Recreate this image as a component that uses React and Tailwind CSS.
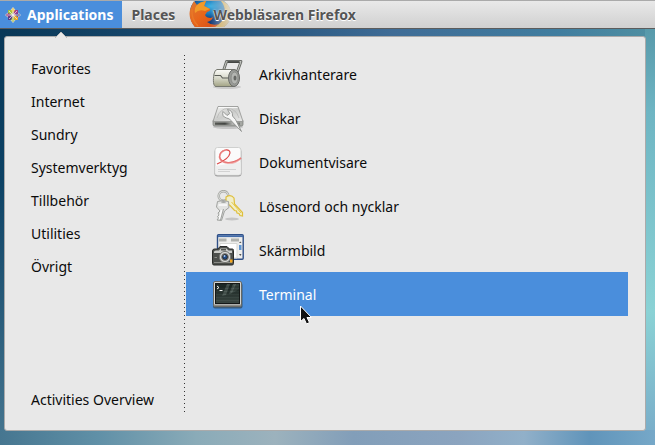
const categories = ['Favorites', 'Internet', 'Sundry', 'Systemverktyg', 'Tillbehör', 'Utilities', 'Övrigt'];

function ArchiveIcon() {
  return (
    <svg className="size-8" viewBox="0 0 32 32" aria-hidden="true">
      <defs>
        <linearGradient id="roll" x1="0" y1="0" x2="0" y2="1">
          <stop offset="0" stopColor="#fbfbf8" /><stop offset=".45" stopColor="#dcddd0" /><stop offset="1" stopColor="#a3a485" />
        </linearGradient>
      </defs>
      <ellipse cx="15" cy="29" rx="14" ry="2" fill="#000" opacity=".12" />
      <path d="M11 14 14.500 3.500H29L24.500 16" fill="none" stroke="#6a6c68" strokeWidth="2.800" strokeLinejoin="round" />
      <path d="M11 14 14.500 3.500H29L24.500 16" fill="none" stroke="#c4c6c1" strokeWidth="1" strokeLinejoin="round" />
      <rect x="15.500" y="2" width="12" height="3" rx="1.500" fill="#444643" />
      <path d="M16 2.800H27" stroke="#858785" strokeWidth=".8" />
      <path d="M5 11.500H21C28 11.500 28 28 21 28.500H4C1 28.500 1 22 2 16Q3 11.500 5 11.500Z" fill="url(#roll)" stroke="#777970" />
      <path d="M2.500 17.500H8.500L10.500 20H17" fill="none" stroke="#5b5d57" strokeWidth="1.200" />
      <ellipse cx="22" cy="20" rx="5.500" ry="8.500" fill="#9a9c98" stroke="#696b68" />
      <ellipse cx="22.500" cy="20" rx="3.500" ry="6" fill="#b3b5b1" stroke="#898b87" />
      <ellipse cx="23" cy="20" rx="1.500" ry="2.500" fill="#666864" />
    </svg>
  );
}

function DisksIcon() {
  return (
    <svg className="size-8" viewBox="0 0 32 32" aria-hidden="true">
      <defs>
        <linearGradient id="disk" x1="0" y1="0" x2="1" y2="1">
          <stop offset="0" stopColor="#f8f8f7" /><stop offset=".5" stopColor="#cbccca" /><stop offset="1" stopColor="#e9e9e8" />
        </linearGradient>
        <linearGradient id="slot" x1="0" y1="0" x2="1" y2="0">
          <stop offset="0" stopColor="#555753" /><stop offset=".4" stopColor="#444643" /><stop offset=".7" stopColor="#b4b5b3" /><stop offset="1" stopColor="#777975" />
        </linearGradient>
      </defs>
      <ellipse cx="16" cy="25" rx="15" ry="2" fill="#000" opacity=".15" />
      <path d="M1 18.500H31V22.500Q31 24 29.500 24H2.500Q1 24 1 22.500Z" fill="#a6a8a4" stroke="#777975" strokeWidth=".7" />
      <path d="M6 4.500H26L31 19.500H1Z" fill="url(#disk)" stroke="#90928f" strokeWidth=".8" />
      <path d="M6.500 5.500H25.500" stroke="#fff" strokeWidth=".8" />
      <path d="M3 20.500H28V22.800H3Z" fill="url(#slot)" />
      <path d="M5 16Q8 6.500 16 6.500T27 16" fill="none" stroke="#b7b8b6" strokeWidth=".8" />
      <path d="M11 9.500Q9.500 14.500 14.500 16L17.500 17 29.500 29.500 23.500 17.500 20.500 14Q21 8.500 15.500 7.500L17.800 11.500 15 13.500Z" fill="#f6f6f5" stroke="#8f918e" strokeWidth=".9" />
    </svg>
  );
}

function DocumentIcon() {
  return (
    <svg className="size-8" viewBox="0 0 32 32" aria-hidden="true">
      <rect x="2.500" y="3" width="27" height="27.500" rx="3" fill="#777" opacity=".65" />
      <rect x="3" y="1.500" width="26" height="27.500" rx="2.500" fill="#fbfbfb" stroke="#cfd0cf" />
      <path d="M3.500 20 28.500 16V28.500H3.500Z" fill="#efefef" />
      <path d="M5 18Q17 13 18 7Q18 3.500 13.500 4Q7.500 5.500 7.500 11Q9 17 17 16.500Q24 16 29 12" fill="none" stroke="#dc4747" strokeWidth="1.200" />
      <path d="M13.500 4Q8 5.500 7.500 11Q9 17 17 17Q24 17 29 12" fill="none" stroke="#ee8c8a" strokeWidth="1.800" opacity=".7" />
      <path d="M6 23.500H24M6 25.500H18" stroke="#d2d2d2" />
    </svg>
  );
}

function KeysIcon() {
  return (
    <svg className="size-8" viewBox="0 0 32 32" aria-hidden="true">
      <ellipse cx="20" cy="29" rx="7" ry="1.500" fill="#000" opacity=".15" />
      <circle cx="11.500" cy="6" r="4.800" fill="none" stroke="#a2a49f" strokeWidth="2.500" />
      <circle cx="11.500" cy="6" r="4.800" fill="none" stroke="#d9dad8" strokeWidth="1.100" />
      <path d="M14 7Q19 4 22 8L22.500 14 30.500 22.500 30.500 26 28 25.500 27 23.500 25 23 24.500 21 22.500 20.500 18 15.500 14 13Z" fill="#f1eec9" stroke="#dfbf3c" strokeWidth="1.200" />
      <path d="M19.500 12 29 23" stroke="#e7cb4b" strokeWidth="1" />
      <path d="M5.500 11.500Q11 9.500 16.500 11.500L17 17.500 12.500 21 9.500 30.500 5 30 6.500 28 5.500 26.500 7 25 6 23 8 21 4.500 17Z" fill="#e2e3e1" stroke="#a0a29f" />
      <path d="M6.500 15H15M9.500 20 7.500 29" stroke="#fcfcfc" strokeWidth="1.500" />
      <path d="M11.500 19 8.500 30" stroke="#8f918e" strokeWidth=".8" />
      <ellipse cx="11.500" cy="12" rx="2.500" ry="1" fill="#a7a9a6" />
    </svg>
  );
}

function ScreenshotIcon() {
  return (
    <svg className="size-8" viewBox="0 0 32 32" aria-hidden="true">
      <rect x="5.500" y=".800" width="25.700" height="24.500" rx="1" fill="#eeeeec" stroke="#2e4f87" strokeWidth="1.400" />
      <path d="M6 2.200H31" stroke="#426ba8" strokeWidth="1.800" />
      <path d="M7 6H14.500M19 6H27" stroke="#b0b2ae" strokeWidth="3" />
      <path d="M8 9.500H25V24H8Z" fill="#fff" stroke="#d6d7d4" />
      <rect x="27" y="11" width="2.500" height="5" fill="#5e94d0" />
      <path d="m27 9 1.300-1.500L29.500 9ZM27 20l1.300 2 1.200-2Z" fill="#555" />
      <path d="M2.500 15H6L8 12.500H15L17.500 15H20.500Q21.500 15 21.500 16.500V29.500Q21.500 31 20 31H2Q.500 31 .500 29.500V17Q.500 15 2.500 15Z" fill="#4d504d" stroke="#2a2c2a" />
      <path d="M2 18Q2 16.500 4 16.500H7L9 14H14L16.500 16.500H20V19H2Z" fill="#cbccc9" />
      <path d="M2 28.500H20M2.500 23.500H5" stroke="#8a8c88" />
      <rect x="9" y="14.500" width="5" height="2" fill="#555753" />
      <circle cx="13" cy="23" r="5.600" fill="#d6d7d5" stroke="#777975" />
      <circle cx="13" cy="23" r="3.400" fill="#242725" stroke="#888" />
      <circle cx="13" cy="23" r="2" fill="#204a87" />
      <circle cx="12.500" cy="22" r=".9" fill="#a9c9ef" />
      <rect x="18" y="25.500" width="2.500" height="3" fill="#f5a71c" />
    </svg>
  );
}

function TerminalIcon() {
  return (
    <svg className="size-8" viewBox="0 0 32 32" aria-hidden="true">
      <defs>
        <linearGradient id="tube" x1="0" y1="0" x2="0" y2="1">
          <stop offset="0" stopColor="#192421" /><stop offset="1" stopColor="#46534e" />
        </linearGradient>
      </defs>
      <rect x="1" y="5" width="29.500" height="25.500" rx="2" fill="#354650" opacity=".7" />
      <rect x="1.500" y="3.500" width="28" height="25" rx="1.500" fill="#d3d4d1" stroke="#666864" />
      <path d="M2 27.300H29" stroke="#8a8c88" strokeWidth="1.600" />
      <rect x="3.500" y="5.500" width="24" height="20" fill="url(#tube)" stroke="#151817" />
      <path d="M4 19Q20 17 27 11V6H23L18 16 10 18Z" fill="#768780" opacity=".25" />
      <path d="M15 6H18L14 17 10 18ZM21 6H24L20 15 17 16Z" fill="#9aaba4" opacity=".32" />
      <path d="M4 9H27M4 12H27M4 15H27M4 18H27M4 21H27M4 24H27" stroke="#0f1714" strokeWidth=".7" opacity=".6" />
      <path d="m5 8 2 1.500L5 11M7.500 12.500H10.500" fill="none" stroke="#f2f4f2" />
    </svg>
  );
}

function CentosIcon() {
  return (
    <svg className="size-4" viewBox="0 0 16 16" aria-hidden="true">
      <path d="m8 0 2.500 3H13v2.500L16 8l-3 2.500V13h-2.500L8 16l-2.500-3H3v-2.500L0 8l3-2.500V3h2.500Z" fill="#e2dcd8" />
      <path d="M3 3h4.500v4.500H3Z" fill="#a0c23c" />
      <path d="M8.500 3H13v4.500H8.500Z" fill="#a23a8a" />
      <path d="M3 8.500h4.500V13H3Z" fill="#56408b" />
      <path d="M8.500 8.500H13V13H8.500Z" fill="#efa724" />
      <path d="m8 .800 2 2.700L8 6 6 3.500Z" fill="#e8c33e" />
      <path d="M15.200 8 12.500 10 10 8l2.500-2Z" fill="#57519c" />
      <path d="M.800 8 3.500 6 6 8 3.500 10Z" fill="#93357e" />
      <path d="m8 15.200-2-2.700L8 10l2 2.500Z" fill="#a4c244" />
      <path d="m4 4 8 8M12 4 4 12M8 2v12M2 8h12" stroke="#f4f0ec" strokeWidth=".7" />
    </svg>
  );
}

function FirefoxIcon() {
  return (
    <svg className="h-[26px] w-[43px]" viewBox="0 0 43 26" aria-hidden="true">
      <defs>
        <radialGradient id="globe" cx=".5" cy=".2">
          <stop offset="0" stopColor="#3fb0e2" /><stop offset=".6" stopColor="#1976b8" /><stop offset="1" stopColor="#173e7a" />
        </radialGradient>
        <linearGradient id="fox" x1="0" y1="0" x2="1" y2="1">
          <stop offset="0" stopColor="#dd7a35" /><stop offset=".5" stopColor="#e8651a" /><stop offset="1" stopColor="#d64c17" />
        </linearGradient>
        <linearGradient id="fade" x1="0" y1="0" x2="1" y2="0">
          <stop offset=".5" stopColor="#fff" /><stop offset=".85" stopColor="#fff" stopOpacity=".4" /><stop offset="1" stopColor="#fff" stopOpacity=".12" />
        </linearGradient>
        <mask id="trail"><rect width="43" height="26" fill="url(#fade)" /></mask>
      </defs>
      <g mask="url(#trail)">
        <path d="M6 0H35Q42 5 42 13T35 26H6Q1 20 1 12T6 0Z" fill="url(#globe)" />
        <path d="M34 0Q43 5 42 15Q41 22 35 26H25Q36 21 36 11Q36 5 32 0Z" fill="#d7ad4c" />
        <path d="M5 0 8 4Q11 1 17 0L15 5 21 8Q22 10 18 11L16 14Q17 17 22 17L24 16Q23 20 18 21Q23 25 30 23L26 26H6Q-1 18 1 9Q2 5 5 0Z" fill="url(#fox)" />
        <path d="M8 4Q11 1 17 0L15 5 21 8 16 10Q10 8 6 12Q5 7 8 4Z" fill="#f19a29" />
        <path d="M3 8Q2 18 9 25" fill="none" stroke="#e97827" strokeWidth="1.500" />
      </g>
    </svg>
  );
}

const apps = [
  { name: 'Arkivhanterare', Icon: ArchiveIcon },
  { name: 'Diskar', Icon: DisksIcon },
  { name: 'Dokumentvisare', Icon: DocumentIcon },
  { name: 'Lösenord och nycklar', Icon: KeysIcon },
  { name: 'Skärmbild', Icon: ScreenshotIcon },
  { name: 'Terminal', Icon: TerminalIcon, active: true },
];

export default function App() {
  return (
    <div className="flex min-h-screen flex-col bg-[linear-gradient(90deg,#467690_0%,#6090a7_15%,#8aabb8_30%,#9cb2bd_42%,#829eb9_54%,#8ba4bf_70%,#91b0c9_80%,#6094ba_90%,#76a8c8_100%),linear-gradient(180deg,#5090a2_0%,#6eb5c3_25%,#8ad2d5_70%,#78aac8_100%),linear-gradient(180deg,#073554_0%,#0c4265_40%,#467690_100%),linear-gradient(90deg,#083756_0%,#205078_35%,#3f6c96_60%,#407d9f_85%,#5090a2_100%)] bg-[length:100%_15px,10px_100%,5px_100%,100%_100%] bg-[position:left_bottom,right_top,left_top,left_top] bg-no-repeat font-['Noto_Sans','Open_Sans',sans-serif] text-sm text-[#0b0b0b]">
      <header className="flex h-[29px] border-t border-b border-t-[#aaa] border-b-[#5c5c5c] bg-linear-to-b from-[#e9e9e9] to-[#d0d0d0] font-bold text-[#555]">
        <button className="relative flex items-center gap-1.5 bg-[#4a8edc] pr-2 pl-[5px] text-white">
          <CentosIcon />
          Applications
          <svg className="absolute top-[30px] left-1/2 z-10 h-[7px] w-3 -translate-x-1/2" viewBox="0 0 12 7" aria-hidden="true">
            <path d="M0 7 6 1l6 6" fill="#e8e8e8" stroke="#bbb" />
          </svg>
        </button>
        <button className="pr-3.5 pl-2.5 [text-shadow:0_1px_#fff]">Places</button>
        <button className="relative flex items-center pr-2 pl-6 [text-shadow:0_0_2px_#fff,0_1px_#fff]">
          <span className="absolute inset-y-0 left-0"><FirefoxIcon /></span>
          <span className="relative">Webbläsaren Firefox</span>
        </button>
      </header>

      <main className="mt-[7px] mr-[9px] mb-3.5 ml-1 flex flex-1 rounded-[3px] border border-[#aaa] bg-[#e8e8e8] pt-[15px] pr-[17px] pb-3.5">
        <nav className="flex w-[179px] shrink-0 flex-col" aria-label="Categories">
          {categories.map((name) => (
            <button key={name} className="h-[33px] pl-[26px] text-left">{name}</button>
          ))}
          <button className="mt-auto h-[33px] pl-[26px] text-left">Activities Overview</button>
        </nav>
        <div className="mt-[3px] mr-px mb-1 w-px bg-[repeating-linear-gradient(180deg,#333_0px,#333_1px,transparent_1px,transparent_4px)]" />
        <ul className="flex-1">
          {apps.map(({ name, Icon, active }) => (
            <li key={name}>
              <button className={active ? 'relative flex h-11 w-full items-center gap-[15px] bg-[#4a8edc] pl-[26px] text-left text-white' : 'flex h-11 w-full items-center gap-[15px] pl-[26px] text-left'}>
                <Icon />
                <span className="pt-0.5">{name}</span>
                {active && (
                  <svg className="absolute top-[33px] left-[113px] h-5 w-3.5" viewBox="0 0 14 20" aria-hidden="true">
                    <path d="M1.500 1v15.500l3.500-3 2.500 5.500 3-1.500-2.500-5H12.500Z" fill="#111" stroke="#fff" />
                  </svg>
                )}
              </button>
            </li>
          ))}
        </ul>
      </main>
    </div>
  );
}
